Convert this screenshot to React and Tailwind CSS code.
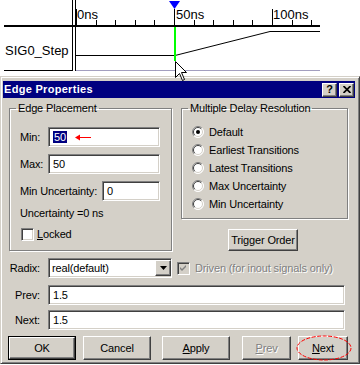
import React from "react";

const sunken =
  "border border-t-[#808080] border-l-[#808080] border-b-white border-r-white shadow-[inset_1px_1px_0_#404040,inset_-1px_-1px_0_#d4d0c8]";
const raised =
  "border border-t-white border-l-white border-b-[#404040] border-r-[#404040] bg-[#d4d0c8] shadow-[inset_-1px_-1px_0_#808080]";
const etched = "border border-[#808080] shadow-[inset_1px_1px_0_#fff,1px_1px_0_#fff]";
const disabledText = "text-[#808080] [text-shadow:1px_1px_0_#fff]";

const ticks = Array.from({ length: 13 }, (_, k) => Math.round(76 + k * 19.6));

function Radio({ checked, label }) {
  return (
    <div className="flex h-[18px] items-center">
      <svg width="12" height="12" viewBox="0 0 12 12" className="shrink-0">
        <circle cx="6" cy="6" r="5.5" fill="#fff" />
        <path d="M2.1 9.9A5.5 5.5 0 0 1 9.9 2.1" stroke="#808080" fill="none" />
        <path d="M9.9 2.1A5.5 5.5 0 0 1 2.1 9.9" stroke="#fff" fill="none" />
        <path d="M2.8 9.2A4.5 4.5 0 0 1 9.2 2.8" stroke="#404040" fill="none" />
        <path d="M9.2 2.8A4.5 4.5 0 0 1 2.8 9.2" stroke="#d4d0c8" fill="none" />
        {checked && <circle cx="6" cy="6" r="2" fill="#000" />}
      </svg>
      <span className="ml-[5px]">{label}</span>
    </div>
  );
}

function CheckBox({ checked, disabled }) {
  return (
    <div
      className={`${sunken} ${disabled ? "bg-[#d4d0c8]" : "bg-white"} flex h-[13px] w-[13px] shrink-0 items-center justify-center`}
    >
      {checked && (
        <svg width="9" height="9" viewBox="0 0 9 9">
          <polygon points="1,3 3,5 7,1 7,3 3,7 1,5" fill={disabled ? "#808080" : "#000"} />
        </svg>
      )}
    </div>
  );
}

function Field({ width, children, className = "" }) {
  return (
    <div className={`${sunken} relative flex h-[20px] items-center bg-white pl-[4px] ${width} ${className}`}>
      {children}
    </div>
  );
}

function Button({ children, width, className = "", isDefault }) {
  if (isDefault) {
    return (
      <div className={`border border-black ${width} h-[24px] ${className}`}>
        <div className={`${raised} flex h-full w-full items-center justify-center`}>{children}</div>
      </div>
    );
  }
  return (
    <div className={`${raised} flex h-[24px] items-center justify-center ${width} ${className}`}>
      {children}
    </div>
  );
}

export default function App() {
  return (
    <div className="relative h-[365px] w-[360px] overflow-hidden bg-white font-['Liberation_Sans',Arial,sans-serif] text-[11px] tracking-[-0.15px] text-black">
      {/* waveform view */}
      <div className="relative h-[76px]">
        <svg width="360" height="76" className="block" shapeRendering="crispEdges">
          <line x1="72.5" y1="0" x2="72.5" y2="71" stroke="#000" />
          <line x1="75.5" y1="0" x2="75.5" y2="71" stroke="#000" />
          <rect x="4" y="25" width="316" height="2" fill="#000" />
          {ticks.map((x, k) => (
            <line
              key={k}
              x1={x + 0.5}
              x2={x + 0.5}
              y1={k % 5 === 0 ? 9 : 20}
              y2="25"
              stroke="#000"
            />
          ))}
          <line x1="4" y1="70.5" x2="72" y2="70.5" stroke="#000" />
          <line x1="76" y1="70.5" x2="320" y2="70.5" stroke="#a29ebf" />
          <g shapeRendering="auto" stroke="#000" fill="none">
            <polyline points="76,55.5 175,55.5 270,31.5 320,31.5" />
          </g>
          <rect x="174" y="27" width="2" height="34" fill="#00ff00" />
          <polygon points="169,1 180,1 174.5,9" fill="#0000ff" shapeRendering="auto" />
        </svg>
        <span className="absolute left-[5px] top-[44px] text-[13px] leading-none tracking-normal">SIG0_Step</span>
        <span className="absolute left-[77px] top-[8px] text-[13px] leading-none tracking-normal">0ns</span>
        <span className="absolute left-[176px] top-[8px] text-[13px] leading-none tracking-normal">50ns</span>
        <span className="absolute left-[273px] top-[8px] text-[13px] leading-none tracking-normal">100ns</span>
        <svg
          width="13"
          height="21"
          viewBox="0 0 13 21"
          className="absolute left-[175px] top-[61px] z-10"
        >
          <path
            d="M0.5 0.5 L0.5 16.5 L4.5 12.5 L7.5 19.5 L9.5 18.5 L6.5 11.5 L11.5 11.5 Z"
            fill="#fff"
            stroke="#000"
          />
        </svg>
      </div>

      {/* dialog */}
      <div className="h-[288px] border border-t-[#d4d0c8] border-l-[#d4d0c8] border-b-[#404040] border-r-[#404040] bg-[#d4d0c8] pl-[2px] pr-[4px] pt-[4px] shadow-[inset_1px_1px_0_#fff,inset_-1px_-1px_0_#808080]">
        <div className="flex h-[17px] items-center bg-[#000080] pl-[1px] pr-[1px]">
          <span className="text-[11px] font-bold tracking-[0.3px] text-white">Edge Properties</span>
          <div className="ml-auto flex gap-[2px]">
            <div className={`${raised} flex h-[14px] w-[15px] items-center justify-center text-[11px] font-bold leading-none`}>
              ?
            </div>
            <div className={`${raised} flex h-[14px] w-[15px] items-center justify-center`}>
              <svg width="8" height="7" viewBox="0 0 8 7">
                <path d="M0.5 0 L7.5 7 M7.5 0 L0.5 7" stroke="#000" strokeWidth="1.7" />
              </svg>
            </div>
          </div>
        </div>

        <div className="mt-[4px] flex items-start pl-[6px]">
          <fieldset className={`${etched} w-[163px]`}>
            <legend className="ml-[6px] px-[2px] leading-[13px]">Edge Placement</legend>
            <div className="pb-[9px] pl-[10px] pt-[12px]">
              <div className="flex items-center">
                <span className="w-[28px]">Min:</span>
                <Field width="w-[112px]">
                  <span className="bg-[#000080] px-[1px] leading-[12px] text-white">50</span>
                  <svg
                    width="17"
                    height="7"
                    viewBox="0 0 17 7"
                    className="absolute left-[26px] top-[6px]"
                  >
                    <path d="M3 3.5 H16" stroke="#ff0000" />
                    <path d="M0 3.5 L5 0.5 L5 6.5 Z" fill="#ff0000" />
                  </svg>
                </Field>
              </div>
              <div className="mt-[7px] flex items-center">
                <span className="w-[28px]">Max:</span>
                <Field width="w-[112px]">50</Field>
              </div>
              <div className="mt-[7px] flex items-center">
                <span className="w-[82px]">Min Uncertainty:</span>
                <Field width="w-[58px]">0</Field>
              </div>
              <div className="mt-[5px] leading-[14px]">Uncertainty =0 ns</div>
              <div className="mt-[8px] flex items-center pl-[1px]">
                <CheckBox />
                <span className="ml-[3px] leading-[13px]">
                  <u>L</u>ocked
                </span>
              </div>
            </div>
          </fieldset>

          <div className="ml-[9px] flex flex-col">
            <fieldset className={`${etched} w-[167px]`}>
              <legend className="ml-[6px] px-[2px] leading-[13px]">Multiple Delay Resolution</legend>
              <div className="pb-[5px] pl-[10px] pt-[8px]">
                <Radio checked label="Default" />
                <Radio label="Earliest Transitions" />
                <Radio label="Latest Transitions" />
                <Radio label="Max Uncertainty" />
                <Radio label="Min Uncertainty" />
              </div>
            </fieldset>
            <div className={`${raised} ml-[47px] mt-[10px] flex h-[22px] w-[70px] items-center justify-center`}>
              Trigger Order
            </div>
          </div>
        </div>

        <div className="mt-[7px] flex items-center">
          <span className="w-[37px] text-right">Radix:</span>
          <div className={`${sunken} ml-[8px] flex h-[20px] w-[124px] items-center bg-white pl-[3px]`}>
            <span>real(default)</span>
            <div className={`${raised} ml-auto flex h-[16px] w-[16px] items-center justify-center`}>
              <svg width="7" height="4" viewBox="0 0 7 4">
                <path d="M0 0 H7 L3.5 4 Z" fill="#000" />
              </svg>
            </div>
          </div>
          <div className="ml-[5px]">
            <CheckBox checked disabled />
          </div>
          <span className={`ml-[5px] ${disabledText}`}>Driven (for inout signals only)</span>
        </div>

        <div className="mt-[7px] flex items-center">
          <span className="w-[37px] text-right">Prev:</span>
          <Field width="w-[297px]" className="ml-[8px]">1.5</Field>
        </div>
        <div className="mt-[5px] flex items-center">
          <span className="w-[37px] text-right">Next:</span>
          <Field width="w-[297px]" className="ml-[8px]">1.5</Field>
        </div>

        <div className="mt-[6px] flex items-center pl-[5px]">
          <Button isDefault width="w-[68px]">OK</Button>
          <Button width="w-[68px]" className="ml-[7px]">Cancel</Button>
          <Button width="w-[68px]" className="ml-[11px]">
            <span>
              <u>A</u>pply
            </span>
          </Button>
          <Button width="w-[49px]" className="ml-[12px]">
            <span className={disabledText}>
              <u>P</u>rev
            </span>
          </Button>
          <div className="relative ml-[7px]">
            <Button width="w-[50px]">
              <span>
                <u>N</u>ext
              </span>
            </Button>
            <svg
              width="56"
              height="26"
              viewBox="0 0 56 26"
              className="absolute left-[-2px] top-[-1px]"
            >
              <ellipse
                cx="28"
                cy="13"
                rx="27"
                ry="12"
                fill="none"
                stroke="#ff0000"
                strokeDasharray="4 1.5"
              />
            </svg>
          </div>
        </div>
      </div>
    </div>
  );
}
